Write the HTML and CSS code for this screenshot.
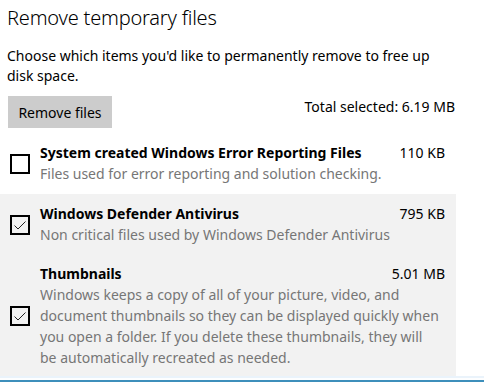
FILE: index.html
```html
<!DOCTYPE html>
<html>
<head>
<meta charset="utf-8">
<link rel="stylesheet" href="styles.css">
</head>
<body>
<div class="page">
  <h1 class="title">Remove temporary files</h1>
  <p class="intro">Choose which items you'd like to permanently remove to free up disk space.</p>
  <div class="actions">
    <button class="btn">Remove files</button>
    <div class="total">Total selected: 6.19 MB</div>
  </div>
  <div class="list">
    <div class="row">
      <span class="box"></span>
      <div class="content">
        <div class="head"><span class="name">System created Windows Error Reporting Files</span><span class="size">110 KB</span></div>
        <div class="desc">Files used for error reporting and solution checking.</div>
      </div>
    </div>
    <div class="row shaded first-shaded">
      <span class="box checked"><svg viewBox="0 0 16 16" width="16" height="16"><path d="M2.5 8.5 L6 12 L13.5 4.5" fill="none" stroke="#222" stroke-width="1"/></svg></span>
      <div class="content">
        <div class="head"><span class="name">Windows Defender Antivirus</span><span class="size">795 KB</span></div>
        <div class="desc">Non critical files used by Windows Defender Antivirus</div>
      </div>
    </div>
    <div class="row shaded last-shaded">
      <span class="box checked"><svg viewBox="0 0 16 16" width="16" height="16"><path d="M2.5 8.5 L6 12 L13.5 4.5" fill="none" stroke="#222" stroke-width="1"/></svg></span>
      <div class="content">
        <div class="head"><span class="name">Thumbnails</span><span class="size">5.01 MB</span></div>
        <div class="desc">Windows keeps a copy of all of your picture, video, and document thumbnails so they can be displayed quickly when you open a folder. If you delete these thumbnails, they will<br>be automatically recreated as needed.</div>
      </div>
    </div>
  </div>
  <div class="bottom"></div>
</div>
</body>
</html>
```
FILE: styles.css
```css
html, body {
  margin: 0;
  padding: 0;
  background: #ffffff;
}
body {
  font-family: "Noto Sans", "Open Sans", "Liberation Sans", sans-serif;
  color: #000;
  width: 484px;
  height: 382px;
  overflow: hidden;
}
.page {
  display: flex;
  flex-direction: column;
  height: 382px;
}
.title {
  margin: 4px 0 0 7px;
  font-size: 20px;
  font-weight: 300;
  line-height: 28px;
  letter-spacing: -0.2px;
}
.intro {
  margin: 14px 0 0 7px;
  font-size: 14px;
  line-height: 20px;
  width: 450px;
}
.actions {
  display: flex;
  align-items: center;
  justify-content: space-between;
  margin: 10px 29px 0 8px;
}
.btn {
  font-family: inherit;
  font-size: 14px;
  background: #cccccc;
  border: none;
  height: 32px;
  width: 104px;
  padding: 0;
  color: #000;
}
.total {
  font-size: 14px;
  margin-top: -12px;
}
.list {
  display: flex;
  flex-direction: column;
  width: 456px;
  margin-top: 15px;
}
.row {
  display: flex;
  align-items: center;
  padding: 0 11px 10px 10px;
}
.row.shaded {
  background: #f2f2f2;
}
.row.first-shaded {
  padding-top: 10px;
  padding-bottom: 19px;
}
.row.last-shaded {
  padding-bottom: 8px;
}
.box {
  width: 16px;
  height: 16px;
  border: 2px solid #000;
  flex: none;
  margin-right: 10px;
  display: flex;
}
.content {
  flex: 1;
  min-width: 0;
}
.head {
  display: flex;
  justify-content: space-between;
  align-items: baseline;
  font-size: 14px;
  line-height: 20px;
}
.name {
  font-weight: 700;
}
.desc {
  font-size: 14px;
  line-height: 21px;
  color: #767676;
}
.bottom {
  margin-top: auto;
  height: 10px;
  border-top: 2px solid #eaf3fb;
  border-bottom: 2px solid #3d8fbb;
  background: #fdfeff;
}
```
